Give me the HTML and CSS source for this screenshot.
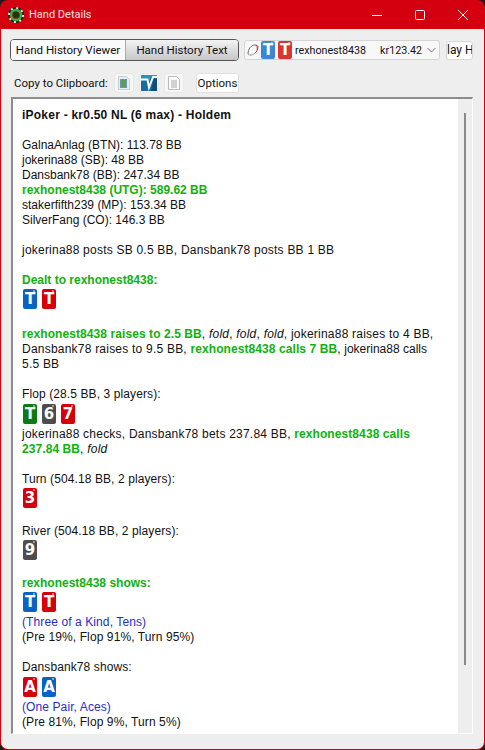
FILE: index.html
```html
<!DOCTYPE html>
<html lang="en">
<head>
    <meta charset="UTF-8">
    <title>Hand Details</title>
    <link rel="stylesheet" href="styles.css">
</head>
<body>
    <div class="window">
        <div class="titlebar">
            <svg class="app-icon" width="16" height="16" viewBox="0 0 16 16">
                <circle cx="8" cy="8" r="7" fill="none" stroke="#222" stroke-width="2"/>
                <circle cx="8" cy="8" r="7" fill="none" stroke="#e8e8e8" stroke-width="2" stroke-dasharray="2 3.5"/>
                <circle cx="8" cy="8" r="5" fill="none" stroke="#35b03f" stroke-width="2.4"/>
                <circle cx="8" cy="8" r="3.2" fill="#123c18"/>
            </svg>
            <span class="title">Hand Details</span>
            <div class="win-controls">
                <svg width="10" height="10" viewBox="0 0 10 10"><path d="M0 5.5H10" stroke="#fff" fill="none"/></svg>
                <svg width="10" height="10" viewBox="0 0 10 10"><rect x="0.5" y="0.5" width="9" height="9" rx="1" stroke="#fff" fill="none"/></svg>
                <svg width="10" height="10" viewBox="0 0 10 10"><path d="M0 0L10 10M10 0L0 10" stroke="#fff" fill="none"/></svg>
            </div>
        </div>
        <div class="client">
            <div class="top-row">
                <div class="tabs">
                    <div class="tab active">Hand History Viewer</div>
                    <div class="tab">Hand History Text</div>
                </div>
                <div class="combo">
                    <svg class="combo-icon" width="13" height="14" viewBox="0 0 13 14">
                        <path d="M1 11C1 6 4 2 8 2C11 2 12 4 10 7" stroke="#666" fill="none"/>
                        <path d="M9 2C11 4 11 8 8 10" stroke="#c33" fill="none"/>
                        <path d="M1 11C3 13 6 12 8 10" stroke="#888" fill="none"/>
                    </svg>
                    <span class="card blue">T</span>
                    <span class="card red">T</span>
                    <span class="combo-name">rexhonest8438</span>
                    <span class="combo-amount">kr123.42</span>
                    <svg class="chevron" width="9" height="6" viewBox="0 0 9 6"><path d="M0.5 1L4.5 5L8.5 1" stroke="#777" fill="none"/></svg>
                </div>
                <div class="replay-btn"><span>lay H</span></div>
            </div>
            <div class="tool-row">
                <span class="tool-label">Copy to Clipboard:</span>
                <div class="icon-btn">
                    <svg width="14" height="16" viewBox="0 0 14 16">
                        <path d="M1.5 1.5H9.5L12.5 4.5V14.5H1.5Z" fill="#e8eef6" stroke="#c4ccd6"/>
                        <rect x="3.5" y="4.5" width="6" height="8" fill="#5da04a" stroke="#6f93bd"/>
                    </svg>
                </div>
                <div class="icon-btn">
                    <svg width="16" height="16" viewBox="0 0 16 16">
                        <rect width="16" height="16" fill="#1a6c9c"/>
                        <path d="M0 0H16V2H10L8.5 6L7 4H0Z" fill="#2f8fc0"/>
                        <path d="M0 4.5H6.5L8 12.5L12 2H16" stroke="#fff" stroke-width="2" fill="none"/>
                        <path d="M13 4H16V16H10Z" fill="#0e4d75"/>
                    </svg>
                </div>
                <div class="icon-btn">
                    <svg width="14" height="16" viewBox="0 0 14 16">
                        <path d="M1.5 1.5H9.5L12.5 4.5V14.5H1.5Z" fill="#fafafa" stroke="#bbb"/>
                        <path d="M4 6H10M4 8H10M4 10H10M4 12H10" stroke="#aaa" fill="none"/>
                    </svg>
                </div>
                <div class="options-btn">Options</div>
            </div>
            <div class="history">
                <div class="history-text">
                    <div class="line heading">iPoker - kr0.50 NL (6 max) - Holdem</div>

                    <div class="block">
                        <div class="line">GalnaAnlag (BTN): 113.78 BB</div>
                        <div class="line">jokerina88 (SB): 48 BB</div>
                        <div class="line">Dansbank78 (BB): 247.34 BB</div>
                        <div class="line hero">rexhonest8438 (UTG): 589.62 BB</div>
                        <div class="line">stakerfifth239 (MP): 153.34 BB</div>
                        <div class="line">SilverFang (CO): 146.3 BB</div>
                    </div>

                    <div class="block">
                        <div class="line wide">jokerina88 posts SB 0.5 BB, Dansbank78 posts BB 1 BB</div>
                    </div>

                    <div class="block">
                        <div class="line hero">Dealt to rexhonest8438:</div>
                        <div class="cards"><span class="card blue">T</span><span class="card red">T</span></div>
                    </div>

                    <div class="block">
                        <div class="line wide"><span class="hero">rexhonest8438 raises to 2.5 BB</span>, <i>fold</i>, <i>fold</i>, <i>fold</i>, jokerina88 raises to 4 BB, Dansbank78 raises to 9.5 BB, <span class="hero">rexhonest8438 calls 7 BB</span>, <span class="snug">jokerina88 calls</span> 5.5 BB</div>
                    </div>

                    <div class="block">
                        <div class="line medium">Flop (28.5 BB, 3 players):</div>
                        <div class="cards low"><span class="card green">T</span><span class="card grey">6</span><span class="card red">7</span></div>
                        <div class="line wide">jokerina88 checks, Dansbank78 bets 237.84 BB, <span class="hero">rexhonest8438 calls 237.84 BB</span>, <i>fold</i></div>
                    </div>

                    <div class="block">
                        <div class="line medium">Turn (504.18 BB, 2 players):</div>
                        <div class="cards"><span class="card red">3</span></div>
                    </div>

                    <div class="block tight">
                        <div class="line medium">River (504.18 BB, 2 players):</div>
                        <div class="cards"><span class="card grey">9</span></div>
                    </div>

                    <div class="block tight">
                        <div class="line hero">rexhonest8438 shows:</div>
                        <div class="cards"><span class="card blue">T</span><span class="card red">T</span></div>
                        <div class="line hand-name">(Three of a Kind, Tens)</div>
                        <div class="line medium">(Pre 19%, Flop 91%, Turn 95%)</div>
                    </div>

                    <div class="block">
                        <div class="line medium">Dansbank78 shows:</div>
                        <div class="cards low"><span class="card red">A</span><span class="card blue">A</span></div>
                        <div class="line hand-name">(One Pair, Aces)</div>
                        <div class="line medium">(Pre 81%, Flop 9%, Turn 5%)</div>
                    </div>
                </div>
                <div class="scrollbar"><div class="thumb"></div></div>
            </div>
        </div>
    </div>
</body>
</html>
```

FILE: styles.css
```css
html, body {
    margin: 0;
    padding: 0;
    height: 100%;
    background: #1c1c1c;
    overflow: hidden;
}
body {
    font-family: "Liberation Sans", Arial, sans-serif;
    font-size: 12px;
    color: #111;
}
.window {
    height: 750px;
    box-sizing: border-box;
    display: flex;
    flex-direction: column;
    background: #d4000f;
    border-radius: 8px;
    padding: 0 1px 1px 1px;
    overflow: hidden;
}
.titlebar {
    height: 29px;
    flex: none;
    display: flex;
    align-items: center;
    padding-left: 7px;
    color: #fff;
}
.app-icon {
    flex: none;
}
.title {
    margin-left: 5px;
    font-family: Roboto, sans-serif;
    font-size: 11px;
    color: #fbe3e3;
}
.win-controls {
    margin-left: auto;
    display: flex;
    gap: 33px;
    padding-right: 16px;
}
.client {
    flex: 1;
    min-height: 0;
    background: #eeeeee;
    border-radius: 0 0 7px 7px;
    display: flex;
    flex-direction: column;
    padding: 10px 11px 15px 9px;
}
.top-row {
    display: flex;
    align-items: center;
    height: 22px;
    flex: none;
}
.tabs {
    display: flex;
    width: 230px;
    height: 22px;
    box-sizing: border-box;
    border: 1px solid #555;
    border-radius: 4px;
    overflow: hidden;
    background: #fff;
    font-family: Roboto, sans-serif;
    font-size: 11.5px;
}
.tab {
    display: flex;
    align-items: center;
    justify-content: center;
}
.tab.active {
    width: 114px;
    flex: none;
    background: #fafafa;
    border-right: 1px solid #aaa;
}
.tab:not(.active) {
    flex: 1;
    background: linear-gradient(#f4f4f4, #c6c6c6);
}
.combo {
    width: 196px;
    height: 20px;
    box-sizing: border-box;
    margin-left: 5px;
    flex: none;
    display: flex;
    align-items: center;
    background: #f8f8f8;
    border: 1px solid #d4d4d4;
    border-radius: 3px;
    padding-left: 2px;
    font-family: Roboto, sans-serif;
    font-size: 10.7px;
}
.combo-icon {
    flex: none;
    margin-right: 1px;
}
.combo .card {
    height: 18px;
    margin-right: 3px;
}
.combo .card.blue {
    background: #3b87d6;
}
.combo .card.red {
    background: #d93535;
}
.combo-amount {
    margin-left: 14px;
}
.chevron {
    margin-left: auto;
    margin-right: 3px;
}
.replay-btn {
    width: 27px;
    height: 19px;
    box-sizing: border-box;
    margin-left: 6px;
    flex: none;
    background: #fff;
    border: 1px solid #d8d8d8;
    border-radius: 3px;
    overflow: hidden;
    display: flex;
    align-items: center;
    white-space: nowrap;
    font-family: Roboto, sans-serif;
}
.tool-row {
    display: flex;
    align-items: center;
    height: 21px;
    margin-top: 11px;
    flex: none;
    padding-left: 4px;
}
.tool-label {
    width: 100px;
    white-space: nowrap;
    font-family: Roboto, sans-serif;
    font-size: 11.5px;
}
.icon-btn {
    width: 20px;
    height: 20px;
    display: flex;
    align-items: center;
    justify-content: center;
    margin-right: 5px;
    background: #f6f6f6;
    border: 1px solid #e8e8e8;
    box-sizing: border-box;
    border-radius: 3px;
}
.options-btn {
    margin-left: 7px;
    width: 43px;
    height: 20px;
    box-sizing: border-box;
    background: #fff;
    border: 1px solid #e0e0e0;
    border-radius: 3px;
    display: flex;
    align-items: center;
    justify-content: center;
    font-family: Roboto, sans-serif;
    font-size: 11.5px;
}
.history {
    flex: 1;
    min-height: 0;
    margin-top: 4px;
    margin-left: 1px;
    display: flex;
    background: #fff;
    border-top: 2px solid #8c8c8c;
    border-left: 2px solid #8c8c8c;
    border-right: 1px solid #fff;
    border-bottom: 1px solid #fff;
    overflow: hidden;
}
.history-text {
    flex: 1;
    min-width: 0;
    padding: 9px 20px 0 9px;
    line-height: 15px;
    overflow: hidden;
}
.heading {
    font-weight: bold;
    letter-spacing: 0.23px;
}
.line.wide {
    letter-spacing: 0.22px;
}
.line.wide .hero {
    letter-spacing: 0.08px;
}
.line.wide .snug {
    letter-spacing: 0;
}
.line.medium {
    letter-spacing: 0.1px;
}
.block {
    margin-top: 15px;
}
.block.tight {
    margin-top: 13px;
}
.hero {
    color: #11b011;
    font-weight: bold;
}
.hand-name {
    color: #2a2ac8;
    letter-spacing: 0.1px;
}
.cards {
    display: flex;
    gap: 5px;
    padding: 1px 0 3px 1px;
}
.cards.low {
    padding-top: 2px;
}
.card {
    position: relative;
    width: 14px;
    height: 20px;
    box-sizing: border-box;
    flex: none;
    display: inline-flex;
    align-items: center;
    justify-content: center;
    border-radius: 2px;
    color: #fff;
    font-family: "DejaVu Sans", sans-serif;
    font-weight: bold;
    font-size: 15px;
    line-height: 20px;
    overflow: hidden;
}
.card::after {
    content: "";
    position: absolute;
    top: 1px;
    right: 2px;
    width: 2px;
    height: 2px;
    border-radius: 50%;
    background: rgba(255, 255, 255, 0.6);
}
.card.blue {
    background: #0a62c4;
}
.card.red {
    background: #d6000c;
}
.card.green {
    background: #0a7a12;
}
.card.grey {
    background: #4d4d4d;
}
.scrollbar {
    width: 14px;
    flex: none;
    background: #eeeeee;
    position: relative;
}
.thumb {
    position: absolute;
    top: 14px;
    left: 6px;
    width: 2px;
    height: 552px;
    background: #8a8a8a;
}
```
